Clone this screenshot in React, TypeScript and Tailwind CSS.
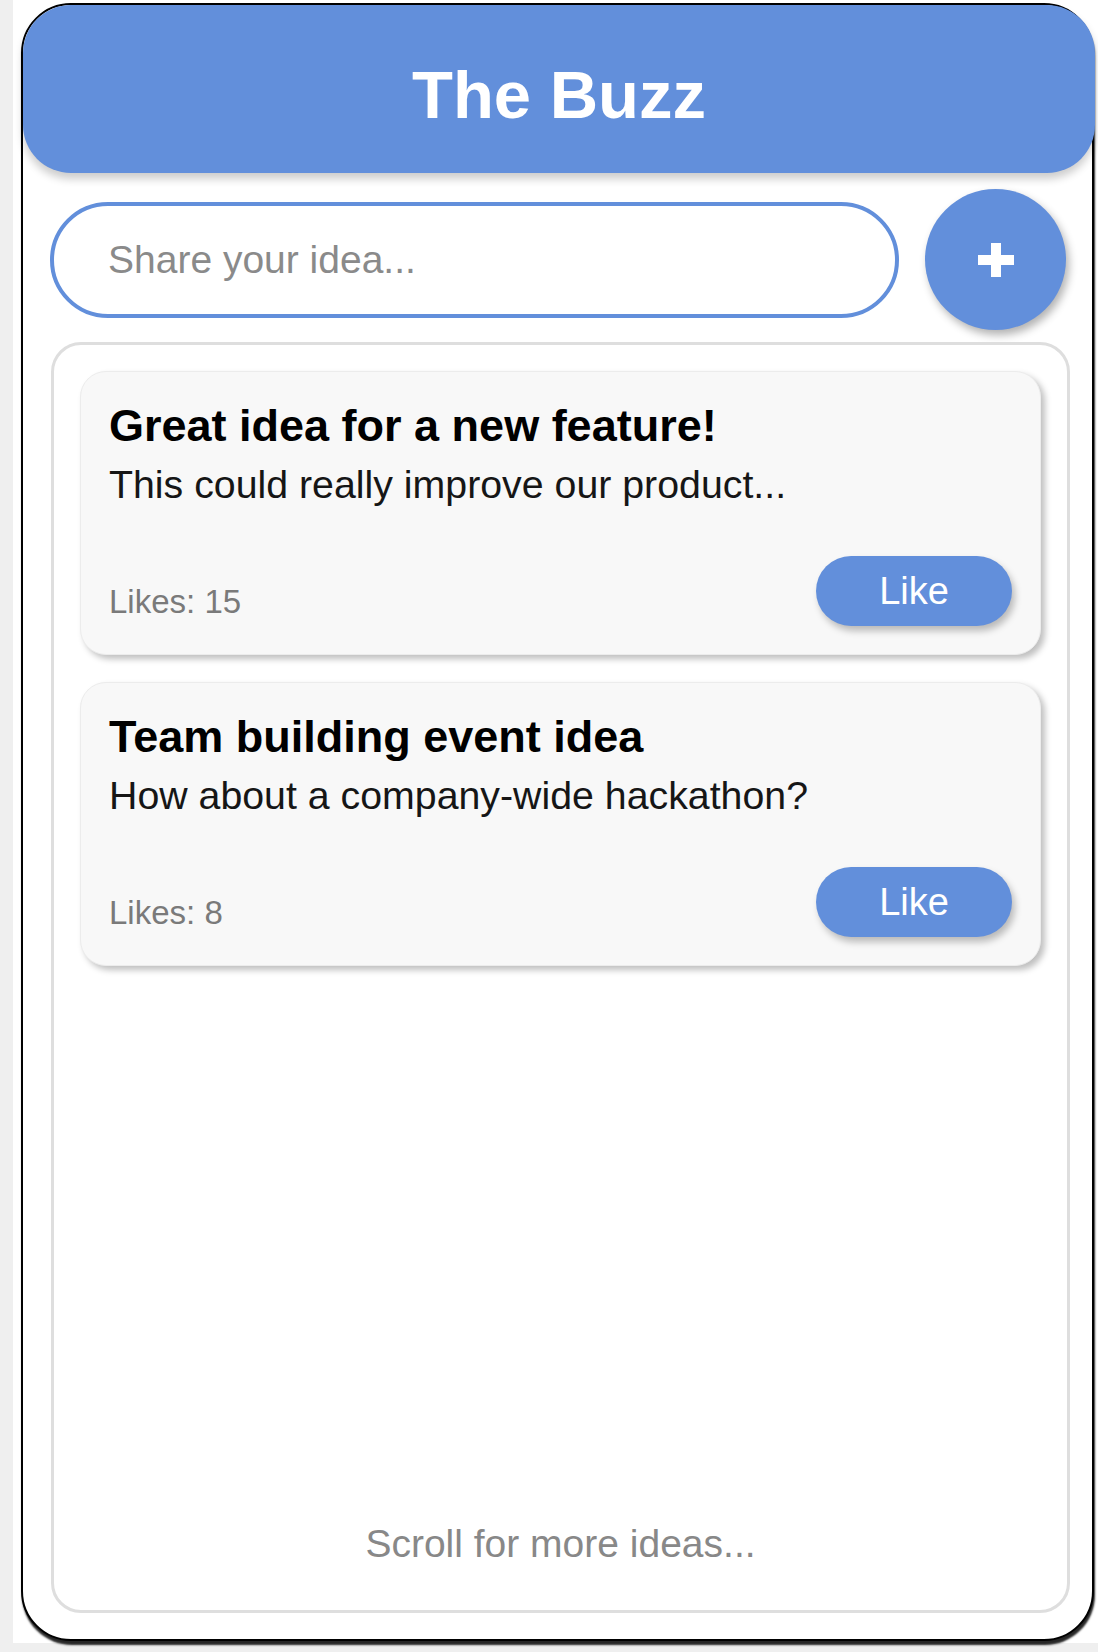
const ideas = [
  {
    id: 1,
    title: "Great idea for a new feature!",
    body: "This could really improve our product...",
    likes: 15,
  },
  {
    id: 2,
    title: "Team building event idea",
    body: "How about a company-wide hackathon?",
    likes: 8,
  },
];

function IdeaCard({ title, body, likes }: { title: string; body: string; likes: number }) {
  return (
    <div className="flex h-[284px] flex-col rounded-[26px] border border-[#ececec] bg-[#f8f8f8] p-[28px] shadow-[4px_4px_6px_rgba(0,0,0,0.25)]">
      <h3 className="text-[45px] leading-[52px] font-bold text-black">{title}</h3>
      <p className="mt-[10px] text-[39.3px] leading-[45px] text-[#161616]">{body}</p>
      <div className="mt-[49px] flex items-end justify-between">
        <span className="pb-[5px] text-[33px] leading-[38px] text-[#7a7a7a]">Likes: {likes}</span>
        <button className="flex h-[70px] w-[196px] items-center justify-center rounded-full bg-[#628fdb] text-[38px] leading-[44px] text-white shadow-[3px_5px_7px_rgba(0,0,0,0.25)]">
          Like
        </button>
      </div>
    </div>
  );
}

export default function App() {
  return (
    <div className="h-[1652px] w-full bg-[#efefef] font-['Liberation_Sans',Arial,sans-serif]">
      <div className="ml-[13px] h-[1643px] bg-white pt-[3px] pl-[8px]">
        <div className="flex h-[1638px] w-[1073px] flex-col rounded-[50px] border-2 border-black bg-white shadow-[1px_4px_2px_rgba(0,0,0,0.85)]">
          {/* header */}
          <header className="-mr-[3px] flex h-[168px] shrink-0 items-center justify-center rounded-[48px] bg-[#628fdb] pt-[11px] shadow-[0_6px_8px_rgba(0,0,0,0.2)]">
            <h1 className="text-[67px] leading-[77px] font-bold text-white">The Buzz</h1>
          </header>

          {/* composer */}
          <div className="mt-[16px] flex items-center gap-[26px] pr-[26px] pl-[27px]">
            <input
              type="text"
              placeholder="Share your idea..."
              className="h-[116px] min-w-0 flex-1 rounded-full border-4 border-[#628fdb] bg-white pl-[54px] text-[39px] text-[#333] outline-none placeholder:text-[#8a8a8a]"
            />
            <button className="flex h-[141px] w-[141px] shrink-0 items-center justify-center rounded-full bg-[#628fdb] shadow-[3px_5px_8px_rgba(0,0,0,0.3)]">
              <svg width="36" height="34" viewBox="0 0 36 34">
                <path d="M18 0V34M0 17H36" stroke="white" strokeWidth="10" />
              </svg>
            </button>
          </div>

          {/* feed */}
          <div className="mt-[12px] mr-[22px] mb-[26px] ml-[28px] flex flex-1 flex-col rounded-[30px] border-[3px] border-[#dedede] p-[26px]">
            <div className="flex flex-col gap-[27px]">
              {ideas.map((idea) => (
                <IdeaCard key={idea.id} title={idea.title} body={idea.body} likes={idea.likes} />
              ))}
            </div>
            <p className="mt-auto mb-[18px] text-center text-[39px] leading-[45px] text-[#888]">
              Scroll for more ideas...
            </p>
          </div>
        </div>
      </div>
    </div>
  );
}
